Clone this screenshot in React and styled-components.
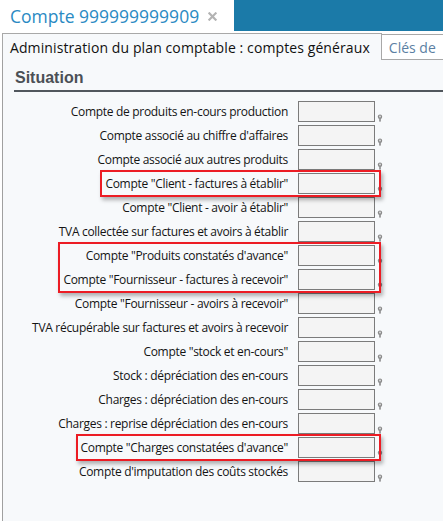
import React from "react";
import styled, { createGlobalStyle } from "styled-components";

const Global = createGlobalStyle`
  html, body { margin: 0; padding: 0; background: #ffffff; }
  body { font-family: "Open Sans", "Noto Sans", sans-serif; color: #111; }
  * { box-sizing: border-box; }
`;

const Page = styled.div`
  width: 443px;
  height: 521px;
  overflow: hidden;
  display: flex;
  flex-direction: column;
`;

const Header = styled.header`
  display: flex;
  height: 31px;
  flex: none;
`;

const TitleArea = styled.div`
  width: 234px;
  display: flex;
  align-items: center;
  padding-left: 10px;
  gap: 9px;
  background: #ffffff;
`;

const Title = styled.h1`
  margin: 0;
  font-family: "Open Sans", sans-serif;
  font-weight: 400;
  font-size: 17.5px;
  line-height: 24px;
  color: #2a8ac3;
  white-space: nowrap;
`;

const CloseBtn = styled.span`
  display: inline-flex;
  width: 9px;
  height: 9px;
  margin-top: 2px;
`;

const HeaderFill = styled.div`
  flex: 1;
  background: #1b7aa8;
`;

const TabStrip = styled.nav`
  display: flex;
  margin-top: 2px;
  padding-left: 2px;
  height: 27px;
  flex: none;
`;

const Tab = styled.div`
  display: flex;
  align-items: center;
  padding: 0 ${(p) => (p.$active ? "11px" : "9px")} 0 7px;
  font-size: 14px;
  letter-spacing: ${(p) => (p.$active ? "0.1px" : "0")};
  white-space: nowrap;
  border: 1px solid #a8a8a8;
  border-bottom: ${(p) => (p.$active ? "none" : "1px solid #a8a8a8")};
  border-left: ${(p) => (p.$active ? "1px solid #a8a8a8" : "none")};
  margin-top: ${(p) => (p.$active ? "0" : "1px")};
  background: ${(p) => (p.$active ? "#f7f9fb" : "#ffffff")};
  color: ${(p) => (p.$active ? "#111" : "#5b7fa3")};
`;

const TabRest = styled.div`
  flex: 1;
  border-bottom: 1px solid #a8a8a8;
`;

const Panel = styled.main`
  flex: 1;
  margin-left: 2px;
  border-left: 1px solid #a0a0a0;
  background: #f7f9fb;
  padding-left: 11px;
`;

const SectionTitle = styled.h2`
  margin: 0;
  padding: 8px 0 2px 1px;
  font-family: "Liberation Sans", Arial, sans-serif;
  font-weight: 700;
  font-size: 16px;
  line-height: 20px;
  color: #4b5056;
  border-bottom: 2px solid #51575d;
`;

const Form = styled.div`
  margin-left: -11px;
  width: 380px;
  margin-top: 9px;
  display: flex;
  flex-direction: column;
  align-items: flex-end;
  gap: 3px;
`;

const Highlight = styled.div`
  position: relative;
  display: flex;
  flex-direction: column;
  align-items: flex-end;
  gap: 3px;
  &::after {
    content: "";
    position: absolute;
    top: -3px;
    bottom: -3px;
    left: -5px;
    right: 2px;
    border: 2px solid #ec1c24;
    box-shadow: 2px 3px 4px rgba(0, 0, 0, 0.3);
    pointer-events: none;
  }
`;

const Row = styled.div`
  display: flex;
  align-items: center;
  height: 21px;
`;

const Label = styled.label`
  font-size: 12px;
  letter-spacing: -0.3px;
  color: #141414;
  white-space: nowrap;
  margin-right: 10px;
`;

const Input = styled.div`
  width: 77px;
  height: 21px;
  border: 1px solid #7b7b7b;
  background: #f4f4f4;
`;

const Pin = styled.svg`
  align-self: flex-end;
  margin-left: 2px;
  width: 6px;
  height: 8px;
`;

const PinIcon = () => (
  <Pin viewBox="0 0 6 8">
    <circle cx="3" cy="2.8" r="2.2" fill="#8a8a8a" />
    <circle cx="3" cy="2.6" r="1" fill="#d8d8d8" />
    <rect x="2.3" y="4.6" width="1.4" height="3" fill="#7a7a7a" />
  </Pin>
);

const Field = ({ label }) => (
  <Row>
    <Label>{label}</Label>
    <Input />
    <PinIcon />
  </Row>
);

const groups = [
  ["Compte de produits en-cours production"],
  ["Compte associé au chiffre d'affaires"],
  ["Compte associé aux autres produits"],
  { hl: ['Compte "Client - factures à établir"'] },
  ['Compte "Client - avoir à établir"'],
  ["TVA collectée  sur factures et avoirs à établir"],
  { hl: ['Compte "Produits constatés d\'avance"', 'Compte "Fournisseur - factures à recevoir"'] },
  ['Compte "Fournisseur - avoirs à recevoir"'],
  ["TVA récupérable sur factures et avoirs à recevoir"],
  ['Compte "stock et en-cours"'],
  ["Stock : dépréciation des en-cours"],
  ["Charges : dépréciation des en-cours"],
  ["Charges : reprise dépréciation des en-cours"],
  { hl: ['Compte "Charges constatées d\'avance"'] },
  ["Compte d'imputation des coûts stockés"],
];

export default function App() {
  return (
    <Page>
      <Global />
      <Header>
        <TitleArea>
          <Title>Compte 999999999909</Title>
          <CloseBtn>
            <svg viewBox="0 0 10 10" width="9" height="9">
              <path d="M1.5 1.5 L8.5 8.5 M8.5 1.5 L1.5 8.5" stroke="#b3b3b3" strokeWidth="2.4" strokeLinecap="square" />
            </svg>
          </CloseBtn>
        </TitleArea>
        <HeaderFill />
      </Header>
      <TabStrip>
        <Tab $active>Administration du plan comptable : comptes généraux</Tab>
        <Tab>Clés de</Tab>
        <TabRest />
      </TabStrip>
      <Panel>
        <SectionTitle>Situation</SectionTitle>
        <Form>
          {groups.map((g, i) =>
            Array.isArray(g) ? (
              <Field key={i} label={g[0]} />
            ) : (
              <Highlight key={i}>
                {g.hl.map((l) => (
                  <Field key={l} label={l} />
                ))}
              </Highlight>
            )
          )}
        </Form>
      </Panel>
    </Page>
  );
}
